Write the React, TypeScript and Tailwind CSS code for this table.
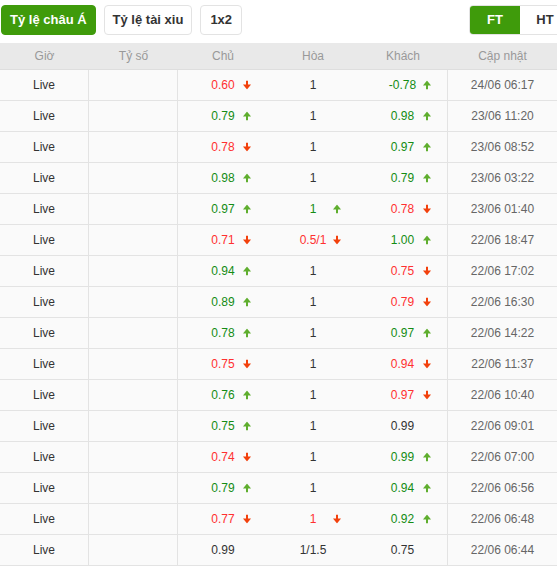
import React from 'react'

type Dir = 'up' | 'down' | null

interface Odd {
  v: string;
  c: 'red' | 'green' | 'plain';
  d: Dir;
}

interface Row {
  chu: Odd;
  hoa: Odd;
  khach: Odd;
  time: string;
}

const o = (v: string, c: Odd['c'] = 'plain', d: Dir = null): Odd => ({ v, c, d })
const one = o('1')

const rows: Row[] = [
  { chu: o('0.60', 'red', 'down'), hoa: one, khach: o('-0.78', 'green', 'up'), time: '24/06 06:17' },
  { chu: o('0.79', 'green', 'up'), hoa: one, khach: o('0.98', 'green', 'up'), time: '23/06 11:20' },
  { chu: o('0.78', 'red', 'down'), hoa: one, khach: o('0.97', 'green', 'up'), time: '23/06 08:52' },
  { chu: o('0.98', 'green', 'up'), hoa: one, khach: o('0.79', 'green', 'up'), time: '23/06 03:22' },
  { chu: o('0.97', 'green', 'up'), hoa: o('1', 'green', 'up'), khach: o('0.78', 'red', 'down'), time: '23/06 01:40' },
  { chu: o('0.71', 'red', 'down'), hoa: o('0.5/1', 'red', 'down'), khach: o('1.00', 'green', 'up'), time: '22/06 18:47' },
  { chu: o('0.94', 'green', 'up'), hoa: one, khach: o('0.75', 'red', 'down'), time: '22/06 17:02' },
  { chu: o('0.89', 'green', 'up'), hoa: one, khach: o('0.79', 'red', 'down'), time: '22/06 16:30' },
  { chu: o('0.78', 'green', 'up'), hoa: one, khach: o('0.97', 'green', 'up'), time: '22/06 14:22' },
  { chu: o('0.75', 'red', 'down'), hoa: one, khach: o('0.94', 'red', 'down'), time: '22/06 11:37' },
  { chu: o('0.76', 'green', 'up'), hoa: one, khach: o('0.97', 'red', 'down'), time: '22/06 10:40' },
  { chu: o('0.75', 'green', 'up'), hoa: one, khach: o('0.99'), time: '22/06 09:01' },
  { chu: o('0.74', 'red', 'down'), hoa: one, khach: o('0.99', 'green', 'up'), time: '22/06 07:00' },
  { chu: o('0.79', 'green', 'up'), hoa: one, khach: o('0.94', 'green', 'up'), time: '22/06 06:56' },
  { chu: o('0.77', 'red', 'down'), hoa: o('1', 'red', 'down'), khach: o('0.92', 'green', 'up'), time: '22/06 06:48' },
  { chu: o('0.99'), hoa: o('1/1.5'), khach: o('0.75'), time: '22/06 06:44' },
]

function Arrow({ dir }: { dir: 'up' | 'down' }) {
  if (dir === 'down') {
    return (
      <svg width="8" height="9" viewBox="0 0 8 9" className="block">
        <rect x="3" y="0" width="2" height="5" fill="#f2400c" />
        <polygon points="0,4 8,4 4,9" fill="#f2400c" />
      </svg>
    )
  }
  return (
    <svg width="8" height="9" viewBox="0 0 8 9" className="block">
      <polygon points="4,0 8,5 0,5" fill="#5fae2e" />
      <rect x="3" y="4" width="2" height="5" fill="#5fae2e" />
    </svg>
  )
}

function OddCell({ odd, className = '' }: { odd: Odd; className?: string }) {
  const color = odd.c === 'red' ? 'text-[#ff3030]' : odd.c === 'green' ? 'text-[#148c14]' : 'text-[#333]'
  return (
    <div className={`relative flex items-center justify-center ${className}`}>
      <span className={color}>{odd.v}</span>
      {odd.d && (
        // arrow sits at a fixed offset from the cell centre, whatever the value width
        <span className="absolute left-[calc(50%+20px)] top-1/2 -translate-y-1/2">
          <Arrow dir={odd.d} />
        </span>
      )}
    </div>
  )
}

export default function App() {
  return (
    <div className="w-[557px] overflow-hidden bg-white text-[12px]" style={{ fontFamily: '"Liberation Sans", Arial, sans-serif' }}>
      <div className="flex items-center pt-[5px] pl-[1px]">
        <div className="flex gap-2">
          <button className="h-[30px] rounded-[4px] border border-[#3f9b0b] bg-[#3f9b0b] px-[8px] text-[13px] font-bold text-white">
            Tỷ lệ châu Á
          </button>
          <button className="h-[30px] rounded-[4px] border border-[#e3e3e3] bg-white px-[8px] text-[13px] font-bold text-[#333]">
            Tỷ lệ tài xiu
          </button>
          <button className="h-[30px] rounded-[4px] border border-[#e3e3e3] bg-white px-[9px] text-[13px] font-bold text-[#333]">
            1x2
          </button>
        </div>
        <div className="ml-auto -mr-[14px] flex h-[30px] overflow-hidden rounded-[4px] border border-[#e3e3e3]">
          <div className="flex w-[50px] items-center justify-center bg-[#3f9b0b] text-[13px] font-bold text-white">FT</div>
          <div className="flex w-[50px] items-center justify-center bg-white text-[13px] font-bold text-[#333]">HT</div>
        </div>
      </div>

      <div className="mt-[8px]">
        <div className="grid h-[27px] grid-cols-[89px_89px_90px_90px_90px_1fr] items-center border-b border-[#dedede] bg-[#e9e9e9] text-center text-[#999]">
          <div>Giờ</div>
          <div>Tỷ số</div>
          <div>Chủ</div>
          <div>Hòa</div>
          <div>Khách</div>
          <div>Cập nhật</div>
        </div>
        {rows.map((r, i) => (
          <div
            key={i}
            className="grid h-[31px] grid-cols-[89px_89px_90px_90px_90px_1fr] border-b border-[#e3e3e3] bg-[#fafafa] text-center"
          >
            <div className="flex items-center justify-center border-r border-[#e3e3e3] text-[#333]">Live</div>
            <div className="border-r border-[#e3e3e3]"></div>
            <OddCell odd={r.chu} />
            <OddCell odd={r.hoa} />
            <OddCell odd={r.khach} className="border-r border-[#e3e3e3]" />
            <div className="flex items-center justify-center text-[#666]">{r.time}</div>
          </div>
        ))}
      </div>
    </div>
  )
}
